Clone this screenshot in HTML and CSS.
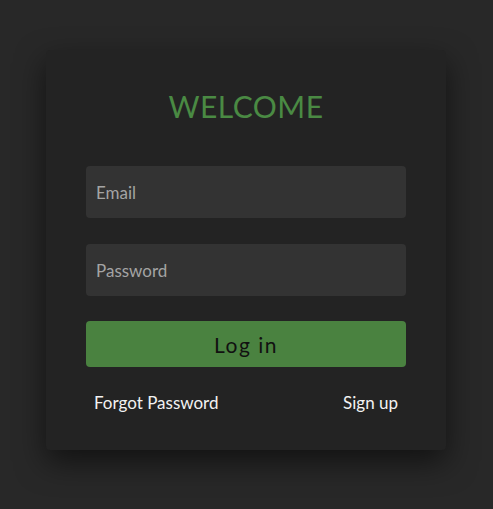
FILE: index.html
```html
<!DOCTYPE html>
<html>
<head>
<meta charset="utf-8">
<link rel="stylesheet" href="styles.css">
</head>
<body>
<div class="page">
  <form class="card">
    <h1 class="title">WELCOME</h1>
    <input class="field" type="text" placeholder="Email">
    <input class="field" type="password" placeholder="Password">
    <button class="login" type="button">Log in</button>
    <div class="links">
      <a class="link">Forgot Password</a>
      <a class="link">Sign up</a>
    </div>
  </form>
</div>
</body>
</html>
```
FILE: styles.css
```css
html, body {
  margin: 0;
  padding: 0;
  background: #282828;
  font-family: "Lato", "Noto Sans", sans-serif;
}
.page {
  width: 493px;
  height: 509px;
  padding: 50px 0 0 46px;
  box-sizing: border-box;
  display: flex;
}
.card {
  width: 400px;
  height: 400px;
  box-sizing: border-box;
  background: #232323;
  border-radius: 4px;
  box-shadow: 0 12px 30px rgba(0,0,0,0.55);
  padding: 38px 40px 0;
  display: flex;
  flex-direction: column;
}
.title {
  margin: 0 0 42px;
  height: 36px;
  line-height: 36px;
  text-align: center;
  color: #4a8a43;
  font-weight: 400;
  font-size: 30px;
  letter-spacing: 0.5px;
}
.field {
  height: 52px;
  border: none;
  border-radius: 4px;
  background: #333333;
  padding: 0 10px;
  font-family: inherit;
  font-size: 17px;
  color: #ddd;
  margin-bottom: 26px;
  outline: none;
}
.field + .field {
  margin-bottom: 25px;
}
.field::placeholder {
  color: #a4a4a4;
}
.login {
  height: 46px;
  border: none;
  border-radius: 4px;
  background: #4a8240;
  color: #111;
  font-family: inherit;
  font-size: 21px;
  letter-spacing: 1.5px;
  padding: 0;
}
.links {
  display: flex;
  justify-content: space-between;
  padding: 0 8px;
  margin-top: 26px;
}
.link {
  color: #f2f2f2;
  font-size: 17px;
  line-height: 20px;
}
```
